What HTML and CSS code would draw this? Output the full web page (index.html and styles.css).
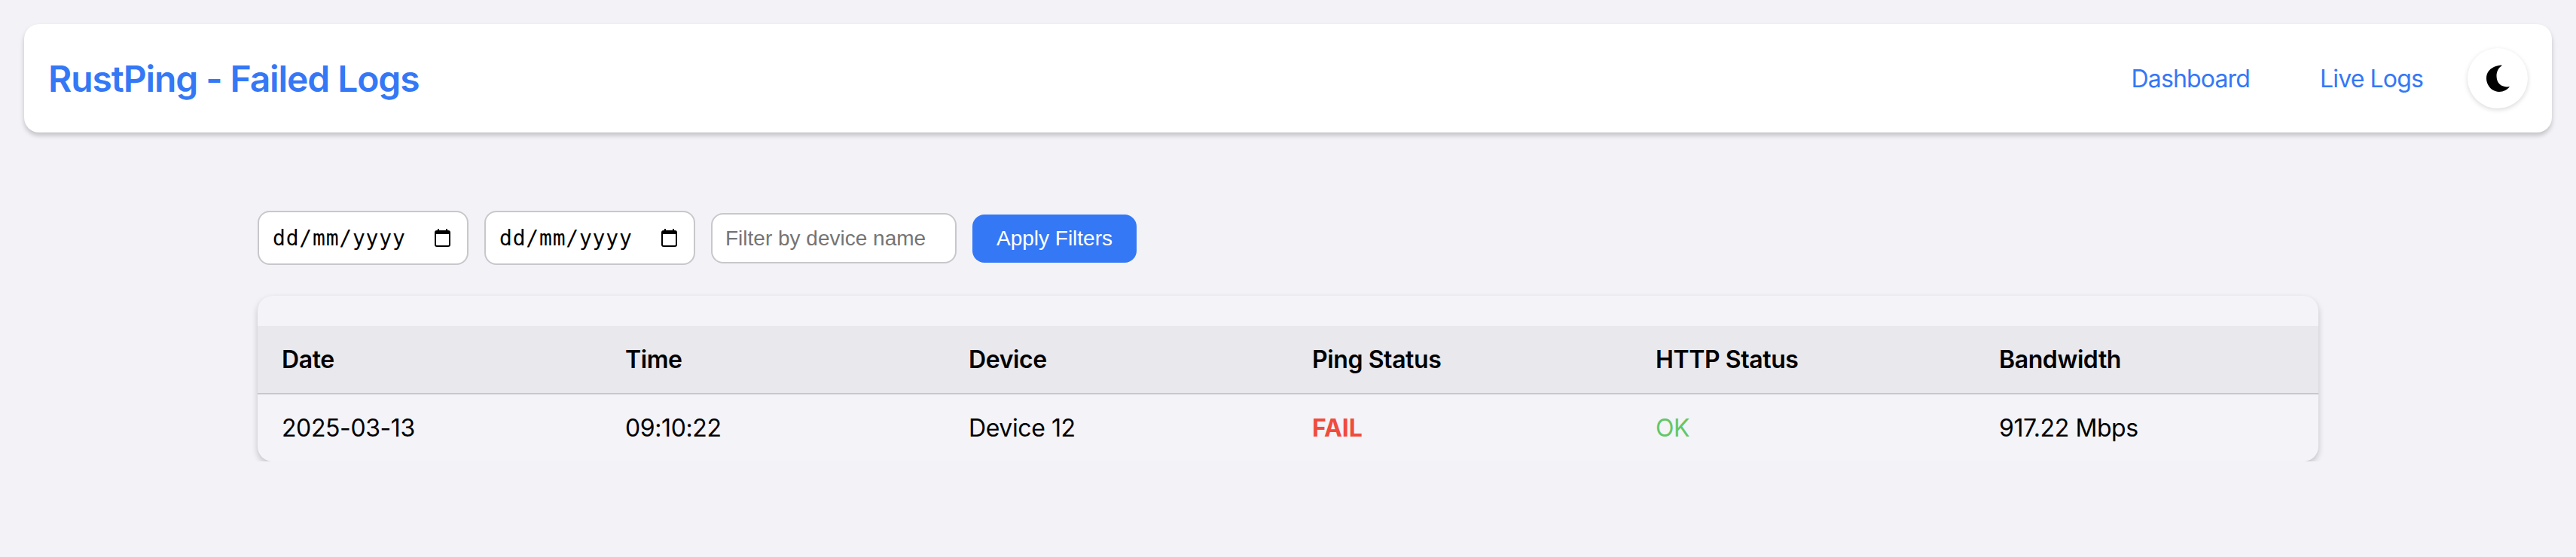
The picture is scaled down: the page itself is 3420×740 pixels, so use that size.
FILE: index.html
```html
<!DOCTYPE html>
<html lang="en">
<head>
    <meta charset="UTF-8">
    <meta name="viewport" content="width=device-width, initial-scale=1.0">
    <title>RustPing - Failed Logs</title>
    <link rel="stylesheet" href="styles.css">
</head>
<body>

<header class="navbar">
    <h1 class="brand">RustPing - Failed Logs</h1>
    <nav class="nav-links">
        <a href="#">Dashboard</a>
        <a href="#">Live Logs</a>
        <button type="button" class="theme-toggle" aria-label="Toggle theme">
            <svg viewBox="0 0 31 36" width="31" height="36"><path d="M20 .5C8 1.500 0 8 0 18c0 10 8 18 17 18 6 0 11-3 14-7-10 2-17.500-4-17.500-14 0-6 2.500-11 7-13.500z" fill="#000"/></svg>
        </button>
    </nav>
</header>

<main class="content">
    <div class="filters">
        <div class="date-field">
            <span>dd/mm/yyyy</span>
            <svg viewBox="0 0 21 24" width="21" height="24"><path d="M4 0h2v2h9V0h2v2h1a3 3 0 0 1 3 3v16a3 3 0 0 1-3 3H3a3 3 0 0 1-3-3V5a3 3 0 0 1 3-3h1zM2 7v14a1 1 0 0 0 1 1h15a1 1 0 0 0 1-1V7z" fill="#000"/></svg>
        </div>
        <div class="date-field">
            <span>dd/mm/yyyy</span>
            <svg viewBox="0 0 21 24" width="21" height="24"><path d="M4 0h2v2h9V0h2v2h1a3 3 0 0 1 3 3v16a3 3 0 0 1-3 3H3a3 3 0 0 1-3-3V5a3 3 0 0 1 3-3h1zM2 7v14a1 1 0 0 0 1 1h15a1 1 0 0 0 1-1V7z" fill="#000"/></svg>
        </div>
        <input type="text" class="device-filter" placeholder="Filter by device name">
        <button type="button" class="apply-btn">Apply Filters</button>
    </div>

    <div class="table-card">
        <table class="log-table">
            <thead>
                <tr>
                    <th>Date</th>
                    <th>Time</th>
                    <th>Device</th>
                    <th>Ping Status</th>
                    <th>HTTP Status</th>
                    <th>Bandwidth</th>
                </tr>
            </thead>
            <tbody>
                <tr>
                    <td>2025-03-13</td>
                    <td>09:10:22</td>
                    <td>Device 12</td>
                    <td class="status-fail">FAIL</td>
                    <td class="status-ok">OK</td>
                    <td>917.22 Mbps</td>
                </tr>
            </tbody>
        </table>
    </div>
</main>

</body>
</html>
```

FILE: styles.css
```css
body {
    margin: 0;
    background-color: #f2f2f7;
    color: #000;
    font-family: Inter, sans-serif;
}
.navbar {
    display: flex;
    justify-content: space-between;
    align-items: center;
    height: 144px;
    margin: 32px 32px 0;
    padding: 0 32px;
    background-color: #fff;
    border-radius: 20px;
    box-shadow: 0 4px 6px rgba(0, 0, 0, 0.2);
}
.brand {
    margin: 0;
    font-size: 48px;
    font-weight: 600;
    letter-spacing: -1.1px;
    color: #3478f6;
}
.nav-links {
    display: flex;
    align-items: center;
}
.nav-links a {
    margin-right: 93px;
    font-size: 32px;
    letter-spacing: -0.85px;
    color: #3478f6;
    text-decoration: none;
}
.nav-links a:last-of-type {
    margin-right: 59px;
}
.theme-toggle {
    display: flex;
    align-items: center;
    justify-content: center;
    width: 80px;
    height: 80px;
    padding: 0;
    background-color: #fff;
    border: none;
    border-radius: 50%;
    box-shadow: 0 2px 6px rgba(0, 0, 0, 0.15);
}
.content {
    width: 80%;
    margin: 104px auto 0;
}
.filters {
    display: flex;
    align-items: center;
    gap: 21px;
    height: 72px;
}
.date-field {
    display: flex;
    align-items: center;
    justify-content: space-between;
    box-sizing: border-box;
    width: 280px;
    height: 72px;
    padding: 0 22px 0 18px;
    background-color: #fff;
    border: 2px solid #c7c7cc;
    border-radius: 16px;
    font-family: "DejaVu Sans Mono", monospace;
    font-size: 28px;
    letter-spacing: 0.8px;
}
.device-filter {
    box-sizing: border-box;
    width: 326px;
    height: 67px;
    padding: 2px 17px 0;
    background-color: #fff;
    border: 2px solid #c7c7cc;
    border-radius: 16px;
    font-family: "Liberation Sans", sans-serif;
    font-size: 28px;
}
.device-filter::placeholder {
    color: #757575;
}
.apply-btn {
    width: 218px;
    height: 64px;
    margin-top: 2px;
    padding: 0;
    background-color: #3478f6;
    color: #fff;
    border: none;
    border-radius: 16px;
    font-family: "Liberation Sans", sans-serif;
    font-size: 28px;
}
.table-card {
    margin-top: 41px;
    padding-top: 40px;
    background-color: #f3f3f8;
    border-radius: 20px;
    box-shadow: 0 4px 8px rgba(0, 0, 0, 0.2);
    overflow: hidden;
}
.log-table {
    width: 100%;
    border-collapse: separate;
    border-spacing: 0;
    table-layout: fixed;
    font-size: 32px;
    letter-spacing: -0.4px;
}
.log-table th {
    box-sizing: border-box;
    height: 91px;
    padding: 0 32px;
    background-color: #e8e8ed;
    border-bottom: 2px solid #c7c7cc;
    font-weight: 600;
    text-align: left;
}
.log-table td {
    box-sizing: border-box;
    height: 89px;
    padding: 0 32px;
}
.status-fail {
    color: #f04c3e;
    font-weight: 700;
    letter-spacing: 0;
}
.status-ok {
    color: #62c765;
}
```
